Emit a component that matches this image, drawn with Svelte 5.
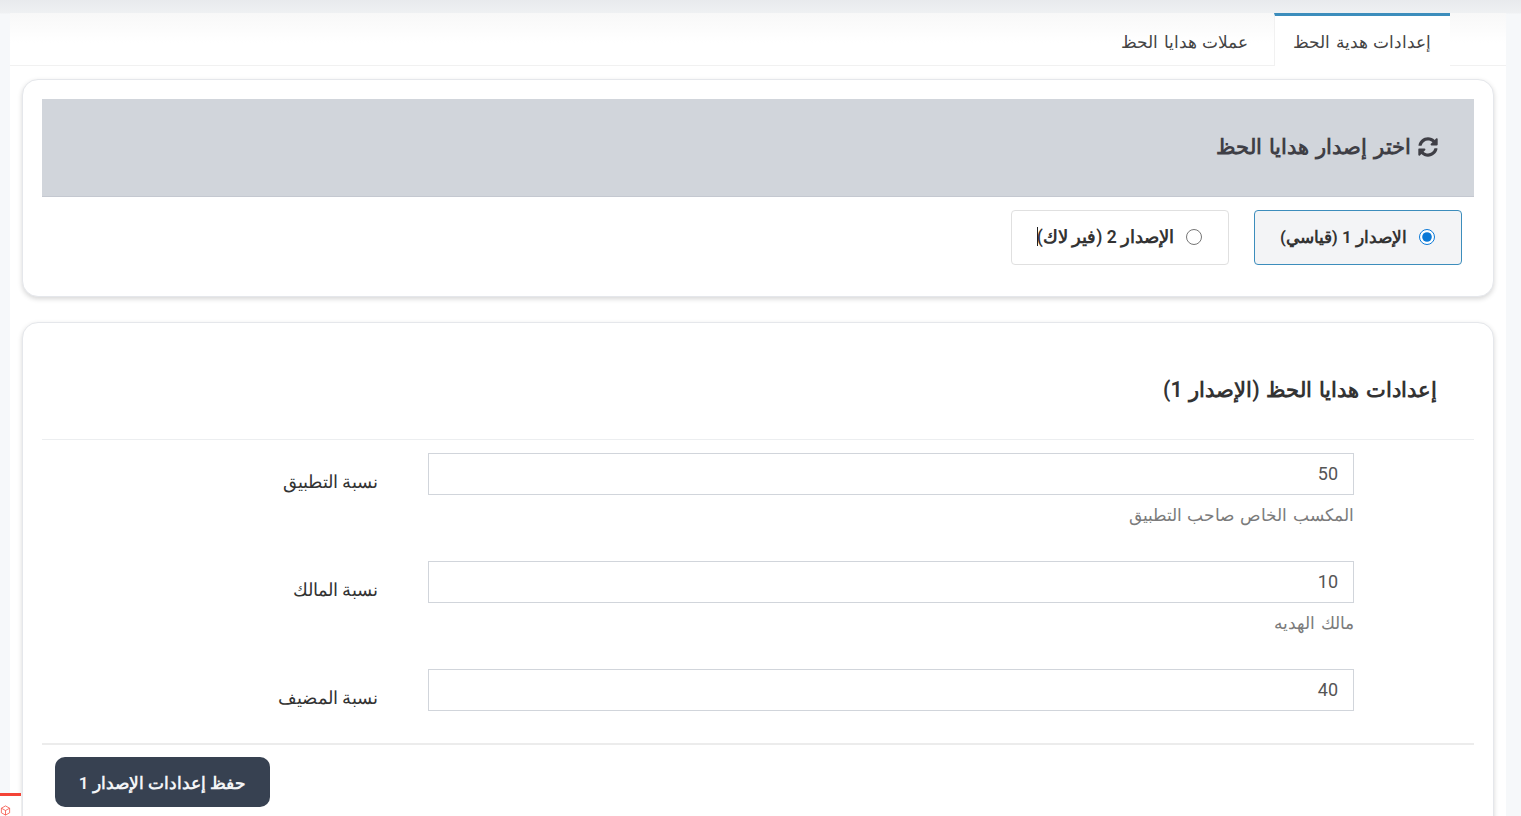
<script>
  const fields = [
    { label: 'نسبة التطبيق', value: '50', help: 'المكسب الخاص صاحب التطبيق' },
    { label: 'نسبة المالك', value: '10', help: 'مالك الهديه' },
    { label: 'نسبة المضيف', value: '40', help: '' }
  ];
</script>

<div class="page" dir="rtl">
  <div class="panel">
    <div class="tabs">
      <div class="tab active">إعدادات هدية الحظ</div>
      <div class="tab">عملات هدايا الحظ</div>
    </div>
    <div class="content">
      <section class="card first">
        <div class="banner">
          <h3>
            <svg class="sync" viewBox="0 0 512 512" aria-hidden="true"><path d="M370.7 133.3C339.5 104 298.9 88 255.8 88c-77.5.1-144.3 53.2-162.8 126.9-1.3 5.4-6.1 9.2-11.7 9.2H24.1c-7.5 0-13.2-6.8-11.8-14.2C33.9 94.9 134.8 8 256 8c66.4 0 126.8 26.1 171.3 68.7L463 41c15.1-15.1 41-4.4 41 17v134c0 13.3-10.7 24-24 24H346c-21.4 0-32.1-25.9-17-41l41.7-41.7zM32 296h134c21.4 0 32.1 25.9 17 41l-41.8 41.8c31.3 29.3 71.8 45.3 114.9 45.2 77.4-.1 144.3-53.1 162.8-126.8 1.3-5.4 6.1-9.2 11.7-9.2h57.3c7.5 0 13.2 6.8 11.8 14.2C478.1 417.1 377.2 504 256 504c-66.4 0-126.8-26.1-171.3-68.7L49 471c-15.1 15.1-41 4.4-41-17V320c0-13.3 10.7-24 24-24z"/></svg>
            اختر إصدار هدايا الحظ
          </h3>
        </div>
        <div class="options">
          <label class="option selected">
            <input type="radio" name="version" checked />
            <span>الإصدار 1 (قياسي)</span>
          </label>
          <label class="option">
            <input type="radio" name="version" />
            <span>الإصدار 2 (فير لاك)</span>
            <i class="caret"></i>
          </label>
        </div>
      </section>

      <section class="card second">
        <h3 class="title">إعدادات هدايا الحظ (الإصدار 1)</h3>
        <div class="form">
          {#each fields as f}
            <div class="row">
              <div class="control">
                <input class="text" type="text" value={f.value} />
                {#if f.help}<p class="help">{f.help}</p>{/if}
              </div>
              <div class="label">{f.label}</div>
            </div>
          {/each}
        </div>
        <div class="footer">
          <button type="button" class="save">حفظ إعدادات الإصدار 1</button>
        </div>
      </section>
    </div>
  </div>

  <div class="widget">
    <svg viewBox="0 0 24 24" fill="none" stroke="#f44336" stroke-width="1.6" stroke-linejoin="round"><path d="M12 2 21 7v10l-9 5-9-5V7z"/><path d="M3 7l9 5 9-5M12 12v10"/></svg>
  </div>
</div>

<style>
  :global(body) {
    margin: 0;
    background: #f4f6f9;
    overflow: hidden;
  }
  .page {
    height: 816px;
    overflow: hidden;
    position: relative;
    box-sizing: border-box;
    padding: 13px 15px 0 15px;
    font-family: Roboto, "Noto Sans", sans-serif;
    color: #333;
    background: linear-gradient(#e8eaed 0, #eff1f3 13px, #f6f8fa 14px);
  }
  .panel {
    background: #fff;
    width: 1496px;
    border-radius: 3px 3px 0 0;
    height: 803px;
  }
  .tabs {
    display: flex;
    height: 53px;
    box-sizing: border-box;
    border-bottom: 1px solid #f1f1f1;
    padding-right: 56px;
    background: linear-gradient(#f8f8f8, #fff 30px);
  }
  .tab {
    box-sizing: border-box;
    height: 53px;
    padding: 14px 20px 0;
    margin-left: 6px;
    font-size: 17.2px;
    word-spacing: 1px;
    line-height: 24px;
    color: #444;
    border-top: 3px solid transparent;
  }
  .tab.active {
    width: 176px;
    background: #fff;
    border-top-color: #3c8dbc;
    border-left: 1px solid #f1f1f1;
    padding-right: 19px;
    padding-left: 0;
  }
  .content {
    padding: 13px 12px 0;
  }
  .card {
    box-sizing: border-box;
    background: #fff;
    border: 1px solid #e5e7eb;
    border-radius: 16px;
    box-shadow: 0 2px 5px rgba(0, 0, 0, 0.16);
    padding: 19px;
  }
  .first {
    height: 218px;
    margin-bottom: 25px;
  }
  .banner {
    height: 98px;
    box-sizing: border-box;
    background: #d1d5db;
    border-bottom: 1px solid #c4c8d0;
    padding: 0 36px 2px 0;
    display: flex;
    align-items: center;
  }
  h3 {
    margin: 0;
    font-size: 21.3px;
    word-spacing: 1.6px;
    line-height: 28px;
    font-weight: 600;
    color: #3f3f46;
  }
  .sync {
    width: 20px;
    height: 20px;
    fill: #3f3f46;
    vertical-align: -3px;
  }
  .options {
    display: flex;
    gap: 25px;
    margin-top: 13px;
    padding-right: 12px;
  }
  .option {
    position: relative;
    box-sizing: border-box;
    width: 218px;
    height: 55px;
    display: flex;
    align-items: center;
    gap: 12px;
    padding: 0 26px 2px 0;
    border: 1px solid #e0e0e0;
    border-radius: 4px;
    font-size: 17.5px;
    font-weight: 600;
    color: #333;
  }
  .option.selected {
    width: 208px;
    background: #f3f4f6;
    border-color: #3c8dbc;
    font-size: 17px;
  }
  .option input {
    margin: 0;
    width: 16px;
    height: 16px;
    flex: none;
    accent-color: #0a78d6;
  }
  .caret {
    width: 1px;
    height: 19px;
    background: #222;
    position: absolute;
    left: 25px;
    top: 16px;
  }
  .title {
    box-sizing: border-box;
    height: 98px;
    padding: 36px 37px 0 0;
    margin: 0;
    font-size: 21.2px;
    word-spacing: 1.5px;
    line-height: 24px;
    color: #333;
    border-bottom: 1px solid #eceef0;
  }
  .second { padding-bottom: 0; height: 600px; }
  .form { padding-top: 13px; }
  .row {
    display: flex;
    height: 108px;
  }
  .row:last-child { height: 74px; }
  .label {
    margin-right: 50px;
    font-size: 17.5px;
    font-weight: 500;
    line-height: 24px;
    padding-top: 17px;
    color: #333;
  }
  .control {
    width: 926px;
    margin-right: 120px;
  }
  .text {
    display: block;
    width: 100%;
    height: 42px;
    box-sizing: border-box;
    border: 1px solid #d1d5db;
    padding: 0 15px 2px;
    font-size: 18px;
    font-family: inherit;
    color: #555;
    background: #fff;
    text-align: right;
    outline: none;
  }
  .help {
    margin: 8px 0 0;
    font-size: 17.35px;
    word-spacing: 1.5px;
    line-height: 24px;
    color: #7b7b7b;
  }
  .footer {
    border-top: 2px solid #ececec;
    padding: 12px 13px;
    display: flex;
    justify-content: flex-end;
  }
  .save {
    width: 215px;
    height: 50px;
    border: 0;
    padding: 2px 0 0;
    border-radius: 10px;
    background: #374151;
    color: #f3f4f6;
    font-size: 17px;
    font-weight: 600;
    font-family: inherit;
  }
  .widget {
    position: absolute;
    left: 0;
    top: 793px;
    width: 21px;
    height: 23px;
    box-sizing: border-box;
    border-top: 3px solid #f44336;
    background: #fff;
    overflow: hidden;
  }
  .widget svg {
    position: absolute;
    left: 0;
    top: 9px;
    width: 11px;
    height: 11px;
  }
</style>
